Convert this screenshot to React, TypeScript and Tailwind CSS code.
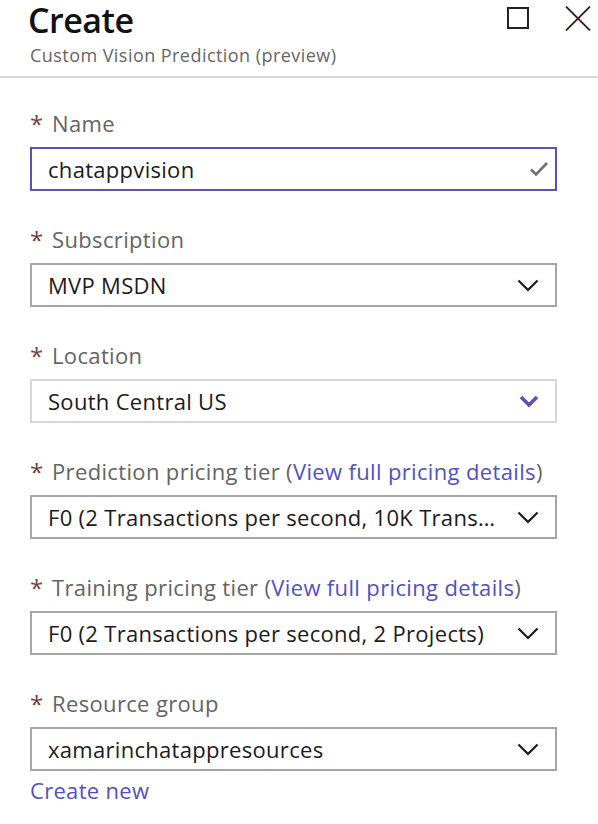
import React from "react";

const Chevron = ({ color = "#1a1a1a" }: { color?: string }) => (
  <svg width="22" height="13" viewBox="0 0 22 13" fill="none">
    <path d="M1.5 1.5 L11 11 L20.5 1.5" stroke={color} strokeWidth="2.2" />
  </svg>
);

const BlueChevron = () => (
  <svg width="20" height="13" viewBox="0 0 20 13" fill="none">
    <path d="M2 2 L10 10 L18 2" stroke="#5b50be" strokeWidth="3.6" />
  </svg>
);

const Label = ({ children }: { children: React.ReactNode }) => (
  <div className="flex items-center h-[28px] text-[22px] tracking-[0.35px] leading-[28px] text-[#646464] relative top-[-1px]">
    <span className="text-[#7a3f3f] w-[22px] text-[24px] leading-[28px] relative top-[1px]">*</span>
    <span>{children}</span>
  </div>
);

const Link = ({ children }: { children: React.ReactNode }) => (
  <span className="text-[#5151c4]">{children}</span>
);

const Select = ({
  value,
  border = "border-[#a6a6a6]",
  icon,
  pr = "pr-[16px]",
}: {
  value: string;
  border?: string;
  icon?: React.ReactNode;
  pr?: string;
}) => (
  <div
    className={`mt-[9px] h-[44px] w-[527px] border-2 ${border} flex items-center pl-[16px] ${pr} bg-white`}
  >
    <div className="flex-1 min-w-0 truncate text-[22px] tracking-[0.3px] text-[#1b1b1b] leading-[28px]">{value}</div>
    <div className="ml-3 flex items-center">{icon ?? <Chevron />}</div>
  </div>
);

export default function App() {
  return (
    <div
      className="w-[598px] h-[824px] bg-white overflow-hidden"
      style={{ fontFamily: "'Open Sans', 'Noto Sans', sans-serif" }}
    >
      <div className="relative h-[76px]">
        <div className="pl-[28px] pt-[3px] text-[34px] leading-[34px] font-semibold text-[#111] tracking-[-0.5px]">
          Create
        </div>
        <div className="pl-[30px] mt-[6px] text-[18px] tracking-[0.45px] leading-[24px] text-[#666]">
          Custom Vision Prediction (preview)
        </div>
        <div className="absolute left-[507px] top-[7px] w-[22px] h-[22px] border-2 border-[#222]" />
        <svg className="absolute left-[565px] top-[6px]" width="26" height="25" viewBox="0 0 26 25" fill="none">
          <path d="M1 0.5 L25 24.5 M25 0.5 L1 24.5" stroke="#3a2222" strokeWidth="1.8" />
        </svg>
      </div>
      <div className="h-[2px] bg-[#d6d6dc]" />
      <div className="pl-[30px] pt-[32px] flex flex-col gap-[35px]">
        <div>
          <Label>Name</Label>
          <Select
            value="chatappvision"
            border="border-[#5b52b6]"
            pr="pr-[6px]"
            icon={
              <svg width="20" height="16" viewBox="0 0 20 16" fill="none">
                <path d="M2 8.5 L7 13.5 L18 2" stroke="#707070" strokeWidth="2.6" />
              </svg>
            }
          />
        </div>
        <div>
          <Label>Subscription</Label>
          <Select value="MVP MSDN" />
        </div>
        <div>
          <Label>Location</Label>
          <Select value="South Central US" border="border-[#d6d6dc]" icon={<BlueChevron />} />
        </div>
        <div>
          <Label>
            Prediction pricing tier (<Link>View full pricing details</Link>)
          </Label>
          <Select value="F0 (2 Transactions per second, 10K Transactions per month)" />
        </div>
        <div>
          <Label>
            Training pricing tier (<Link>View full pricing details</Link>)
          </Label>
          <Select value="F0 (2 Transactions per second, 2 Projects)" />
        </div>
        <div>
          <Label>Resource group</Label>
          <Select value="xamarinchatappresources" />
          <div className="mt-[5px] text-[22px] tracking-[0.3px] leading-[28px] text-[#5151c4]">Create new</div>
        </div>
      </div>
    </div>
  );
}
